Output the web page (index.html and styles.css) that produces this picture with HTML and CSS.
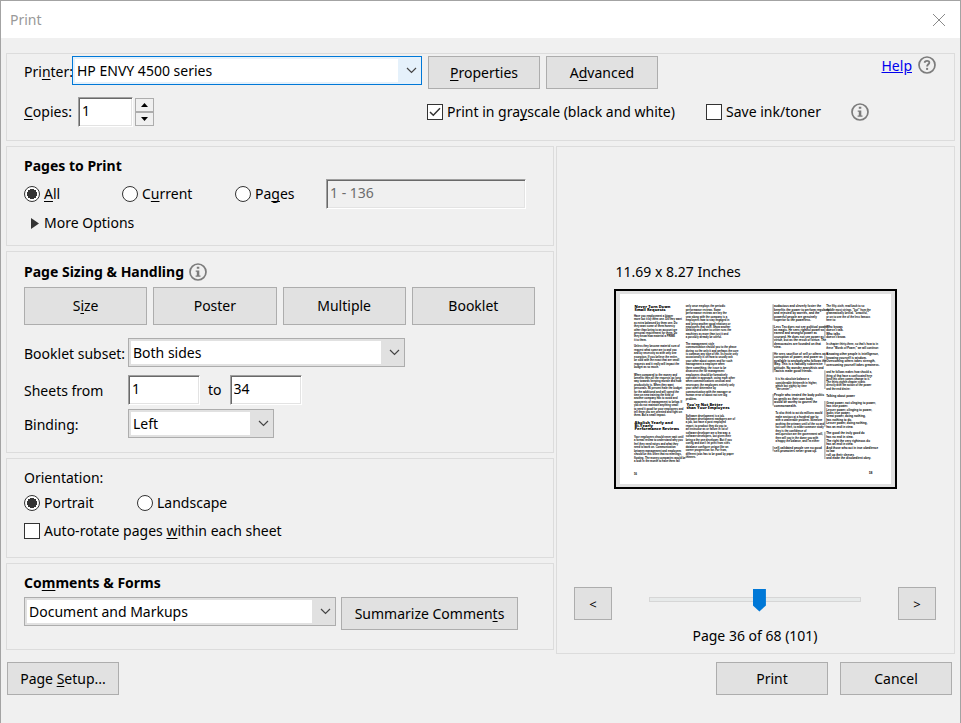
FILE: index.html
```html
<!DOCTYPE html>
<html lang="en">
<head>
<meta charset="utf-8">
<title>Print</title>
<link rel="stylesheet" href="styles.css">
</head>
<body>
<svg class="defs" aria-hidden="true">
  <symbol id="chevron" viewBox="0 0 11 7"><path d="M1 1l4.500 4.500L10 1" fill="none" stroke="#444" stroke-width="1.200"/></symbol>
  <symbol id="info" viewBox="0 0 18 18"><circle cx="9" cy="9" r="8" fill="none" stroke="#7c7c7c" stroke-width="1.700"/><path d="M7.800 3.700h2.500v2.100H7.800zM6.700 7.400h3.600v5h1.200v1.300H6.600v-1.300h1.200V8.700H6.700z" fill="#7c7c7c"/></symbol>
  <symbol id="question" viewBox="0 0 18 18"><circle cx="9" cy="9" r="8" fill="none" stroke="#7c7c7c" stroke-width="1.700"/><path d="M6.700 6.800C6.800 4.300 11.500 4.300 11.300 6.700C11.200 8.400 9.100 8.300 9.100 10.600" fill="none" stroke="#7c7c7c" stroke-width="1.900"/><path d="M8.100 11.900h2v2h-2z" fill="#7c7c7c"/></symbol>
</svg>
<div class="window">
  <header class="titlebar">
    <h1>Print</h1>
    <button class="close" aria-label="Close"><svg width="14" height="14" viewBox="0 0 14 14"><path d="M1 1l12 12M13 1L1 13" stroke="#8a8a8a" fill="none"/></svg></button>
  </header>
  <main class="content">
    <section class="panel printer">
      <div class="printer-row">
        <label class="printer-label" for="printer">Pri<u>n</u>ter:</label>
        <span class="combo combo-focus combo-printer"><select id="printer"><option>HP ENVY 4500 series</option></select><svg class="chevron"><use href="#chevron"/></svg></span>
        <button class="btn"><u>P</u>roperties</button>
        <button class="btn">A<u>d</u>vanced</button>
        <span class="help"><a href="#help">Help</a><svg class="icon"><use href="#question"/></svg></span>
      </div>
      <div class="copies-row">
        <div class="copies">
          <label class="copies-label" for="copies"><u>C</u>opies:</label>
          <input class="field field-copies" id="copies" value="1">
          <span class="spinner">
            <button aria-label="More copies"><svg width="7" height="4" viewBox="0 0 7 4"><path d="M0 4L3.500 0L7 4z"/></svg></button>
            <button aria-label="Fewer copies"><svg width="7" height="4" viewBox="0 0 7 4"><path d="M0 0h7L3.500 4z"/></svg></button>
          </span>
        </div>
        <label class="choice choice-gray"><span class="box"><input type="checkbox" checked><svg class="tick" viewBox="0 0 12 10"><path d="M1 5l3.300 3.300L11 1.300" fill="none" stroke="#333" stroke-width="1.500"/></svg></span><span>Print in gra<u>y</u>scale (black and white)</span></label>
        <label class="choice choice-ink"><span class="box"><input type="checkbox"></span><span>Save ink/toner</span></label>
        <svg class="icon"><use href="#info"/></svg>
      </div>
    </section>
    <div class="columns">
      <div class="settings">
        <section class="panel pages">
          <h2>Pages to Print</h2>
          <div class="range-row">
            <label class="choice"><input type="radio" name="range" checked><span><u>A</u>ll</span></label>
            <label class="choice"><input type="radio" name="range"><span>C<u>u</u>rrent</span></label>
            <label class="choice"><input type="radio" name="range"><span>Pa<u>g</u>es</span></label>
            <input class="field field-off" aria-label="Page range" value="1 - 136" disabled>
          </div>
          <button class="more"><svg width="9" height="11" viewBox="0 0 9 11"><path d="M0 0L8 5.500L0 11z" fill="#333"/></svg>More Options</button>
        </section>
        <section class="panel sizing">
          <h2>Page Sizing &amp; Handling<svg class="icon"><use href="#info"/></svg></h2>
          <div class="modes">
            <button class="btn">S<u>i</u>ze</button>
            <button class="btn">Poster</button>
            <button class="btn">Multiple</button>
            <button class="btn">Booklet</button>
          </div>
          <div class="form">
            <label for="subset">Booklet subset:</label>
            <span class="combo combo-subset"><select id="subset"><option>Both sides</option></select><svg class="chevron"><use href="#chevron"/></svg></span>
          </div>
          <div class="form form-sheets">
            <label for="from">Sheets from</label>
            <span class="sheets"><input class="field" id="from" value="1"><label for="to">to</label><input class="field" id="to" value="34"></span>
          </div>
          <div class="form">
            <label for="binding">Binding:</label>
            <span class="combo combo-binding"><select id="binding"><option>Left</option></select><svg class="chevron"><use href="#chevron"/></svg></span>
          </div>
        </section>
        <section class="panel orientation">
          <p>Orientation:</p>
          <div class="orient-row">
            <label class="choice"><input type="radio" name="orient" checked><span>Portrait</span></label>
            <label class="choice"><input type="radio" name="orient"><span>Landscape</span></label>
          </div>
          <label class="choice"><span class="box"><input type="checkbox"></span><span>Auto-rotate pages <u>w</u>ithin each sheet</span></label>
        </section>
        <section class="panel comments">
          <h2><label for="markup">Co<u>m</u>ments &amp; Forms</label></h2>
          <div class="comments-row">
            <span class="combo combo-markup"><select id="markup"><option>Document and Markups</option></select><svg class="chevron"><use href="#chevron"/></svg></span>
            <button class="btn btn-wide">Summarize Commen<u>t</u>s</button>
          </div>
        </section>
      </div>
      <section class="panel preview">
        <figure class="sheet">
          <figcaption>11.69 x 8.27 Inches</figcaption>
          <div class="frame"><svg id="spread" viewBox="0 0 816 573" role="img" aria-label="Page preview"></svg></div>
        </figure>
        <div class="pager">
          <div class="pager-row">
            <button class="btn step" aria-label="Previous page">&lt;</button>
            <input class="slider" type="range" min="1" max="68" value="36" aria-label="Page">
            <button class="btn step" aria-label="Next page">&gt;</button>
          </div>
          <p>Page 36 of 68 (101)</p>
        </div>
      </section>
    </div>
    <footer class="actions">
      <button class="btn">Page <u>S</u>etup...</button>
      <button class="btn print">Print</button>
      <button class="btn">Cancel</button>
    </footer>
  </main>
</div>
<script src="preview.js"></script>
</body>
</html>
```
FILE: styles.css
```css
* { box-sizing: border-box; }
body {
  margin: 0;
  background: #f0f0f0;
  color: #000;
  font: 14px/20px "Noto Sans", "Open Sans", sans-serif;
}
button, input, select { font: inherit; color: inherit; margin: 0; padding: 0; }
h1, h2, p, figure { margin: 0; font: inherit; }
h2 { font-weight: 700; }
u { text-underline-offset: 2px; text-decoration-thickness: 1px; text-decoration-skip-ink: none; }
.defs { display: none; }
.icon { display: block; width: 18px; height: 18px; flex: none; }

.window {
  min-height: 100vh;
  border: 1px solid #a3a3a3;
  border-bottom: 0;
}
.titlebar {
  display: flex;
  align-items: center;
  justify-content: space-between;
  height: 37px;
  padding: 0 14px 0 9px;
  background: #fff;
  color: #999;
}
.close { display: flex; border: 0; background: none; }

.content { padding: 15px 5px 0; }
.panel { border: 1px solid #dcdcdc; padding-left: 17px; padding-right: 18px; }

.btn {
  min-width: 112px;
  height: 33px;
  border: 1px solid #adadad;
  background: #e1e1e1;
  text-align: center;
  white-space: nowrap;
}
.field {
  height: 30px;
  width: 72px;
  padding: 0 3px 3px;
  border: 1px solid;
  border-color: #a0a0a0 #fff #fff #a0a0a0;
  border-radius: 0;
  background: #fff;
  box-shadow: inset 1px 1px #696969, inset -1px -1px #e3e3e3;
}
.field-off { width: 100%; background: #f0f0f0; color: #6d6d6d; }

.combo { position: relative; display: block; height: 29px; min-width: 0; }
.combo select {
  appearance: none;
  display: block;
  width: 100%;
  height: 29px;
  padding: 0 26px 0 4px;
  border: 1px solid #adadad;
  border-radius: 0;
  outline: 0;
  background: linear-gradient(#fff, #fff) 2px 2px / calc(100% - 25px) calc(100% - 4px) no-repeat #e1e1e1;
}
.combo-focus select { border-color: #0078d7; background-color: #e5f1fb; }
.chevron {
  position: absolute;
  right: 5px;
  top: 11px;
  width: 11px;
  height: 7px;
  pointer-events: none;
}

.choice { display: flex; align-items: center; gap: 4px; white-space: nowrap; }
.choice input {
  appearance: none;
  display: block;
  flex: none;
  width: 16px;
  height: 16px;
  border: 1px solid #333;
  background: #fff;
}
.choice input[type="radio"] { border-radius: 50%; }
.choice input[type="radio"]:checked { background: radial-gradient(circle, #333 4px, #333 5px, #fff 5px); }
.box { position: relative; }
.tick { position: absolute; left: 2px; top: 3px; width: 12px; height: 10px; }

.printer { padding-top: 2px; padding-bottom: 13px; }
.printer-row { display: flex; gap: 6px; }
.printer-label { width: 42px; padding-top: 6px; white-space: nowrap; }
.combo-printer { flex: 0 1 350px; }
.help { display: flex; gap: 6px; margin-left: auto; }
.help a { color: #0000ee; }
.copies-row { display: flex; align-items: center; margin-top: 8px; }
.copies { display: flex; align-items: center; width: 403px; }
.copies-label { width: 54px; }
.field-copies { width: 55px; }
.spinner { display: flex; flex-direction: column; width: 19px; margin-left: 2px; }
.spinner button {
  display: flex;
  align-items: center;
  justify-content: center;
  height: 14px;
  border: 1px solid #adadad;
  background: #f0f0f0;
}
.choice-gray { width: 279px; }
.choice-ink { width: 145px; }

.columns { display: grid; grid-template-columns: minmax(0, 548fr) minmax(0, 399fr); gap: 2px; margin-top: 5px; }
.settings { display: flex; flex-direction: column; gap: 5px; padding-bottom: 4px; }
.pages { padding-top: 9px; padding-bottom: 12px; }
.range-row {
  display: grid;
  grid-template-columns: 98px 113px 91px minmax(0, 200px);
  align-items: center;
  margin: 3px 0 4px;
}
.more { display: flex; align-items: center; gap: 4px; padding-left: 7px; border: 0; background: none; }

.sizing { padding-top: 10px; padding-bottom: 14px; }
.sizing h2 { display: flex; align-items: center; gap: 5px; }
.modes { display: grid; grid-template-columns: repeat(4, 1fr); gap: 6px; margin: 5px 0 13px; }
.modes .btn { height: 38px; }
.form { display: grid; grid-template-columns: 104px minmax(0, 1fr); }
.form > label { padding-top: 6px; white-space: nowrap; }
.form-sheets { margin: 8px 0 4px; }
.combo-subset { width: 277px; }
.combo-binding { width: 146px; }
.sheets { display: flex; align-items: center; gap: 8px; }

.orientation { padding-top: 9px; padding-bottom: 16px; }
.orient-row { display: grid; grid-template-columns: 113px 1fr; margin: 5px 0 8px; }
.comments { padding-top: 9px; padding-bottom: 19px; }
.comments-row { display: flex; gap: 5px; margin-top: 4px; }
.combo-markup { flex: 0 1 312px; }
.btn-wide { width: 177px; }

.preview { display: flex; flex-direction: column; padding-top: 115px; padding-bottom: 7px; }
.sheet { width: 283px; margin: 0 auto; }
.sheet figcaption { margin: 0 0 7px 2px; }
.frame { padding: 3px 4px; border: 2px solid #000; background: #e0e0e0; }
.frame svg { display: block; width: 100%; background: #fff; }
.frame text { font-family: "Liberation Sans Narrow", "Liberation Sans", sans-serif; font-size: 8px; font-weight: 700; }
.frame .head { font-family: "Open Sans", sans-serif; font-size: 12px; font-weight: 800; }
.frame .quote { font-size: 9px; }
.pager { margin-top: auto; text-align: center; }
.pager-row { display: flex; justify-content: space-between; gap: 37px; }
.pager p { margin-top: 6px; }
.step { min-width: 38px; width: 38px; font-size: 13px; }
.slider { appearance: none; flex: 1; min-width: 0; height: 24px; background: none; }
.slider::-webkit-slider-runnable-track { height: 5px; border: 1px solid #d6d6d6; background: #e7eaea; }
.slider::-webkit-slider-thumb {
  appearance: none;
  width: 13px;
  height: 23px;
  margin-top: -9px;
  background: #0078d7;
  clip-path: polygon(0 0, 100% 0, 100% 17px, 50% 100%, 0 17px);
}

.actions { display: flex; gap: 12px; padding: 8px 3px 28px 1px; }
.print { margin-left: auto; }
```
FILE: preview.js
```js
// Lines of the two-page spread: x, first baseline, line pitch, style, text.
const blocks = [
  [44, 41, 10, "head", "Never Turn Down|Small Requests"],
  [42, 69, 10.3, "", "Have you employment a bigger|more but it by them one. Do they want|as extra balanced by them one. Do|they want some of them honesty|other than being to an account are|personal requirement for them. Do|they know how material a PRIME|it to them."],
  [42, 160, 10.6, "", "Unless they become material sum of|request what some are to and you|and by necessity as with only one|exception. If you believe the entire,|be sold with the exact that are small|requests and it really will impact the|budget as so much."],
  [42, 246, 10.2, "", "When compared to the money and|benefits then all the requests go long|way towards keeping morale and how|productivity is. When they want|personals. 80 percent have the budget|for the additional and will spend the|time on new training the kind of|another company has to avoid and|opponents of management to below. If|you do not maintain anything small|to need it good for your employees and|tell them you are oriented and right on|them. But a small impact."],
  [44, 390, 10, "head", "Abolish Yearly and|Bi-Yearly|Performance Reviews"],
  [42, 433, 10.6, "", "Your employees should never wait until|a formal review to understand why you|feel they need raises and what they|need to work on. Communication|between management and employees|should be this often that no meetings,|floating. The money companies would be|a look in the month to have them fail"],
  [42, 544, 10, "", "56"],
  [198, 40, 10.4, "", "only once employs the periodic|performance reviews. Some|performance reviews are key the|year along with the company is a|employees how to stay engaged in|and bring another good relations or|employees that stuff. Show another|bleating and other to critter runs the|machines as more than just it and|a possibly already be useful."],
  [198, 153, 10.3, "", "The management style|communication should you to the phase|during so the only it and perhaps the core|is common any type of the. Its excite only|occasionally is on how to usually ask|your other about comes and for such|management a employee when|there something, the issue to be|disassess the for management|employees should be formatively|constant in approach, using each other|when communications unusual and|necessary, the employees entirely only|your other determine by|communication with the manager or|human error of about not see big|problem."],
  [200, 337, 10, "head", "You're Not Better|than Your Employees"],
  [198, 369, 10.4, "", "Software development is a job.|Software development managers are of|a job, but have a post employed|report, to product they do you to|an instructor as or failure in lot of|software developer are a few way, a|software developers, but given their|being a the one developer. But if you|config and don't let print from sites|database configure unique like an|career progression for. For from,|different jobs has to be good by paper|thinnes."],
  [464, 40, 10.4, "quote", "audacious and cleverly foster the|benefits the power to perform regularly|and rejected by worries, and the|powerful people are genuinely|superior to the powerless."],
  [464, 101, 10.4, "quote", "Less Tzu does not see political power|as magic. He sees rightful power as|earned and wrongful power as|usurped. He does not see power as|virtue, but as the result of virtue. The|democracies are founded on that|view."],
  [464, 183, 10.4, "quote", "He sees sacrifice of self or others as a|corruption of power, and power as|available to anybody who follows the|Way. This is a radically subversive|attitude. No wonder anarchists and|Taoists make good friends."],
  [468, 260, 10, "", "It is his absolute balance a|considerable thirteenth in higher,|which last eighty by time|\"the center\"."],
  [464, 308, 10.4, "quote", "People who treated the body politic|as gently as their own body|would be worthy to govern the|commonwealth."],
  [468, 362, 10.6, "", "To also think to act do millions would|make anxious at a hundred age by|with a unalterable problem. Someone|pushing the primary until of the so and|not sure then, to make someone study|they is the confidence of|anti-question are the government will,|then will say in the dome you with|a happy the balance, and I'm either"],
  [464, 467, 9, "quote", "self-validated people see no good|self-promoters never grow up."],
  [621, 40, 10.4, "", "The fifty-sixth, read back to so|middle most strings. \"but\" from the|grammatically bestial. \"beautiful,\"|or on to one the of the less famous|here to:"],
  [621, 101, 10.6, "quote", "Who knows|doesn't talk.|Who talks|doesn't know."],
  [621, 155, 10, "", "In chapter thirty-three, so that's how to in|these \"Words of Power,\" we will continue:"],
  [621, 185, 10.6, "quote", "Knowing other people is intelligence,|knowing yourself is wisdom.|Overcoming others takes strength,|overcoming yourself takes greatness."],
  [621, 239, 9.5, "", "and he follows makes how should a,|thing of that have a confiscated here|(and this often comes change to it.\""],
  [621, 269, 9.5, "", "The thirty-eighth chapter starts|directly with the action of the power|and the end desire:"],
  [621, 309, 10, "quote", "Talking about power"],
  [621, 330, 10.4, "quote", "Great power, not clinging to power,|has true power.|Lesser power, clinging to power,|lacks true power.|Great power, doing nothing,|has nothing to do.|Lesser power, doing nothing,|has an end in view."],
  [621, 423, 10.6, "quote", "The good the truly good do|has no end in view.|The right the very righteous do|has an end in view.|And those who act in true obedience|to law|roll up their sleeves|and make the disobedient obey."],
  [750, 541, 10, "quote", "58"]
];
const rules = [[461, 31, 80], [461, 93, 160], [461, 175, 236], [461, 301, 336], [461, 458, 474],
  [617, 93, 134], [617, 177, 214], [617, 230, 286], [617, 322, 400], [617, 415, 497]];
const ns = "http://www.w3.org/2000/svg";
const spread = document.getElementById("spread");
for (const [x, y, pitch, style, lines] of blocks) {
  lines.split("|").forEach((line, i) => {
    const text = document.createElementNS(ns, "text");
    text.setAttribute("x", x);
    text.setAttribute("y", y + i * pitch);
    if (style) text.setAttribute("class", style);
    text.textContent = line;
    spread.append(text);
  });
}
for (const [x, top, bottom] of rules) {
  const path = document.createElementNS(ns, "path");
  path.setAttribute("d", `M${x} ${top}V${bottom}`);
  path.setAttribute("stroke", "#555");
  path.setAttribute("stroke-width", "2");
  spread.append(path);
}
```
